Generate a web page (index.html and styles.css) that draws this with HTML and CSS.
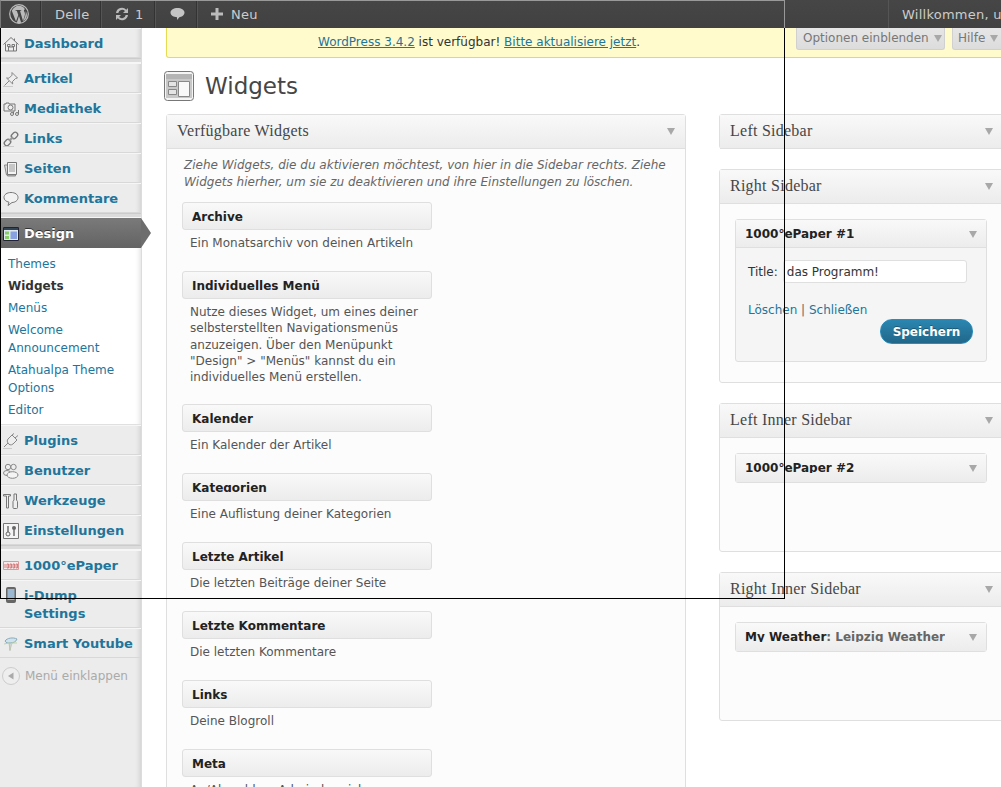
FILE: index.html
```html
<!DOCTYPE html>
<html lang="de">
<head>
<meta charset="utf-8">
<title>Widgets</title>
<link rel="stylesheet" href="styles.css">
</head>
<body>
<svg class="defs" width="0" height="0" aria-hidden="true">
  <defs>
    <symbol id="i-home" viewBox="0 0 16 16"><path d="M.5 8.500 8 1.500l7.500 7M2.500 7.500v7.500h11V7.500M5.500 15v-4h5v4M4.500 8.500h2.500v2h-2.500zM9 8.500h2.500v2H9zM11.500 2.500v2.500" fill="none" stroke="#777" stroke-width="1"/></symbol>
    <symbol id="i-pin" viewBox="0 0 16 16"><path d="M9 1.500 14.500 7l-2 .5-3 3 .2 2.500L3.500 7l2.500.2 3-3zM6 10l-4.500 4.500" fill="#eee" stroke="#888"/><path d="M0 15.500h10" stroke="#ccc"/></symbol>
    <symbol id="i-media" viewBox="0 0 16 16"><path d="M1 3h2V2h3v1h6v7H1z" fill="#eee" stroke="#777"/><circle cx="7.500" cy="6.500" r="2.500" fill="none" stroke="#777"/><circle cx="9" cy="13" r="1.500" fill="none" stroke="#777"/><circle cx="14" cy="13" r="1.500" fill="none" stroke="#777"/><path d="M10.500 13V10.500M15.500 13V9" stroke="#777"/></symbol>
    <symbol id="i-link" viewBox="0 0 16 16"><g fill="none" stroke="#777"><rect x="-3.500" y="-2.500" width="7" height="5" rx="2.500" transform="translate(4.500 11.500) rotate(-45)" stroke-width="1.300"/><rect x="-3.500" y="-2.500" width="7" height="5" rx="2.500" transform="translate(11.500 4.500) rotate(-45)" stroke-width="1.300"/></g><path d="M6 10 10 6" stroke="#999" stroke-width="2"/><path d="M0 15.500h11" stroke="#ccc"/></symbol>
    <symbol id="i-page" viewBox="0 0 16 16"><path d="M1.500 4h3v11h8v-1h-9z" fill="#ddd" stroke="#888"/><path d="M4.500 1.500h9v12h-9z" fill="#f4f4f4" stroke="#777"/><path d="M6 4h6M6 6h6M6 8h6M6 10h6" stroke="#999"/></symbol>
    <symbol id="i-comment" viewBox="0 0 16 16"><path d="M8 1.500c4 0 7 2 7 5s-3 5-6 5l-4 3 1-3.300C3 10.500 1 9 1 6.500c0-3 3-5 7-5z" fill="#f2f2f2" stroke="#777"/></symbol>
    <symbol id="i-plug" viewBox="0 0 16 16"><path d="M5 6 9 2l5 5-4 4c-2 1.500-4 1-5-1-1-1.500-1-2.500 0-4zM9 2l2-1.500M12 5l3-2.500M5 10l-4 4" fill="#eee" stroke="#888"/><path d="M0 15.500h9" stroke="#ccc"/></symbol>
    <symbol id="i-users" viewBox="0 0 16 16"><circle cx="5" cy="4" r="2.700" fill="#eee" stroke="#888"/><circle cx="10.500" cy="4" r="2.700" fill="#eee" stroke="#888"/><ellipse cx="4" cy="10" rx="3.500" ry="2.500" fill="#eee" stroke="#888"/><ellipse cx="9.500" cy="12" rx="5.500" ry="3.300" fill="#f4f4f4" stroke="#888"/></symbol>
    <symbol id="i-tools" viewBox="0 0 16 16"><path d="M.5 1.500h7v1.500h-2v12h-2V3h-3zM11 7V1h2.500v6l1 1.500v6a1 1 0 0 1-1 1h-2.500a1 1 0 0 1-1-1v-6z" fill="#eee" stroke="#777"/></symbol>
    <symbol id="i-set" viewBox="0 0 16 16"><path d="M.5.500h15v15H.5z" fill="#f4f4f4" stroke="#777"/><circle cx="5" cy="11" r="2" fill="none" stroke="#666"/><path d="M5 9V3M11 6.500V13" stroke="#666" stroke-width="1.400"/><circle cx="11" cy="5" r="2" fill="#666"/></symbol>
    <symbol id="i-paper" viewBox="0 0 16 16"><path d="M.5 3.500h15v8H.5z" fill="#f6eaea" stroke="#d99"/><path d="M2 6v4M4 6h1.500v4H4zM7 6h1.500v4H7zM10 6h1.500v4H10zM13 6h1.500v4H13z" fill="none" stroke="#c66" stroke-width=".8"/></symbol>
    <symbol id="i-phone" viewBox="0 0 16 16"><rect x="3" y="0" width="10" height="16" rx="2" fill="#666"/><rect x="4.500" y="2" width="7" height="11" fill="#9bb8d0"/></symbol>
    <symbol id="i-yt" viewBox="0 0 16 16"><path d="M2 5c2-3 8-4 12-2-1 3-4 4-7 4-2 0-4 0-5-2z" fill="#cfe3ef" stroke="#8ab"/><path d="M1 8l5-1 1 7 2-7h5" fill="none" stroke="#bcd5a0"/><path d="M7 7v8" stroke="#bbb"/></symbol>
  </defs>
</svg>

<header class="adminbar">
  <div class="ab-left">
    <div class="ab-item ab-logo">
      <svg width="20" height="20" viewBox="0 0 20 20"><circle cx="10" cy="10" r="9.300" fill="none" stroke="#bbb" stroke-width="1.200"/><path d="M2.800 6.800 7 17.500l2.300-6.500-1.500-4.200h-1.200V6h5.600v.8h-1.200L14 17l1.600-5c.6-1.800.5-3-.4-4.500-.5-1-.2-2 .8-2.300C14.300 2.800 12.300 1.800 10 1.800 6.900 1.800 4.300 3.800 2.800 6.800zM10 12l-2.200 6.800c1.400.4 3 .3 4.400-.1zM16.600 7c.5 2.800-.2 5-2.400 10.300 3.600-2.300 5-6.500 2.400-10.300z" fill="#bbb"/></svg>
    </div>
    <div class="ab-item ab-user">Delle</div>
    <div class="ab-item ab-update">
      <svg width="16" height="16" viewBox="0 0 16 16"><path d="M2 7a6 6 0 0 1 10.300-3.300L14 2v5H9l2-2A4 4 0 0 0 4.300 7zM14 9a6 6 0 0 1-10.300 3.300L2 14V9h5l-2 2a4 4 0 0 0 6.700-2z" fill="#bbb"/></svg>
      <span>1</span>
    </div>
    <div class="ab-item ab-comment">
      <svg width="15" height="14" viewBox="0 0 16 15"><path d="M8 1c4 0 7.500 1.800 7.500 5S12 11 10 11l-2.500 3V11C4 11 .5 9.200.5 6S4 1 8 1z" fill="#c4c4c4"/></svg>
    </div>
    <div class="ab-item ab-new">
      <svg width="12" height="12" viewBox="0 0 12 12"><path d="M4.500 0h3v4.500H12v3H7.500V12h-3V7.500H0v-3h4.500z" fill="#bbb"/></svg>
      <span>Neu</span>
    </div>
  </div>
  <div class="ab-item ab-welcome">Willkommen, user</div>
</header>

<div class="layout">
  <nav class="sidebar">
    <a class="menu-item"><svg class="mi"><use href="#i-home"/></svg>Dashboard</a>
    <div class="menu-sep"></div>
    <a class="menu-item"><svg class="mi"><use href="#i-pin"/></svg>Artikel</a>
    <a class="menu-item"><svg class="mi"><use href="#i-media"/></svg>Mediathek</a>
    <a class="menu-item"><svg class="mi"><use href="#i-link"/></svg>Links</a>
    <a class="menu-item"><svg class="mi"><use href="#i-page"/></svg>Seiten</a>
    <a class="menu-item"><svg class="mi"><use href="#i-comment"/></svg>Kommentare</a>
    <div class="menu-sep"></div>
    <a class="menu-item menu-current">
      <svg class="mi" viewBox="0 0 16 16"><path d="M.5 1.500h15v13H.5z" fill="#dfe8f0" stroke="#223"/><path d="M1 2h14v2H1z" fill="#345"/><path d="M2 5.500h4v3H2zM2 10h4v3H2z" fill="#8c6"/><path d="M7.500 5.500H14V13H7.500z" fill="#88a0e0"/></svg>
      Design
    </a>
    <ul class="submenu">
      <li><a>Themes</a></li>
      <li class="sub-current"><a>Widgets</a></li>
      <li><a>Menüs</a></li>
      <li><a>Welcome Announcement</a></li>
      <li><a>Atahualpa Theme Options</a></li>
      <li><a>Editor</a></li>
    </ul>
    <a class="menu-item"><svg class="mi"><use href="#i-plug"/></svg>Plugins</a>
    <a class="menu-item"><svg class="mi"><use href="#i-users"/></svg>Benutzer</a>
    <a class="menu-item"><svg class="mi"><use href="#i-tools"/></svg>Werkzeuge</a>
    <a class="menu-item"><svg class="mi"><use href="#i-set"/></svg>Einstellungen</a>
    <div class="menu-sep"></div>
    <a class="menu-item"><svg class="mi"><use href="#i-paper"/></svg>1000°ePaper</a>
    <a class="menu-item menu-tall"><svg class="mi"><use href="#i-phone"/></svg><span>i-Dump Settings</span></a>
    <a class="menu-item"><svg class="mi"><use href="#i-yt"/></svg>Smart Youtube</a>
    <div class="collapse">
      <svg width="18" height="18" viewBox="0 0 18 18"><circle cx="9" cy="9" r="8.500" fill="#eee" stroke="#ccc"/><path d="M11.500 5.500v7L6 9z" fill="#aaa"/></svg>
      Menü einklappen
    </div>
  </nav>

  <main class="content">
    <div class="notice">
      <span><a>WordPress 3.4.2</a> ist verfügbar! <a>Bitte aktualisiere jetzt</a>.</span>
      <div class="tabs">
        <div class="tab tab-options">Optionen einblenden<i class="arrow"></i></div>
        <div class="tab tab-help">Hilfe<i class="arrow"></i></div>
      </div>
    </div>

    <div class="page-title">
      <svg class="page-icon" width="30" height="30" viewBox="0 0 30 30"><rect x=".5" y=".5" width="29" height="29" rx="3" fill="#f4f4f4" stroke="#777"/><path d="M2 3h26v24H2z" fill="#c8c8c8"/><path d="M2 3h26v5H2z" fill="#b4b4b4"/><path d="M4.500 10.500h8v5h-8zM4.500 18.500h8v5h-8z" fill="#e4e4e4" stroke="#888"/><path d="M14.500 10.500h11v15h-11z" fill="#f8f8f8" stroke="#888"/></svg>
      <h1>Widgets</h1>
    </div>

    <div class="columns">
      <section class="panel panel-available">
        <div class="panel-head"><h2>Verfügbare Widgets</h2><i class="arrow"></i></div>
        <p class="panel-desc">Ziehe Widgets, die du aktivieren möchtest, von hier in die Sidebar rechts. Ziehe Widgets hierher, um sie zu deaktivieren und ihre Einstellungen zu löschen.</p>
        <div class="widget-list">
          <article class="avail"><div class="w-title"><span>Archive</span></div><p>Ein Monatsarchiv von deinen Artikeln</p></article>
          <article class="avail"><div class="w-title"><span>Individuelles Menü</span></div><p>Nutze dieses Widget, um eines deiner selbsterstellten Navigationsmenüs anzuzeigen. Über den Menüpunkt "Design" &gt; "Menüs" kannst du ein individuelles Menü erstellen.</p></article>
          <article class="avail"><div class="w-title"><span>Kalender</span></div><p>Ein Kalender der Artikel</p></article>
          <article class="avail"><div class="w-title"><span>Kategorien</span></div><p>Eine Auflistung deiner Kategorien</p></article>
          <article class="avail"><div class="w-title"><span>Letzte Artikel</span></div><p>Die letzten Beiträge deiner Seite</p></article>
          <article class="avail"><div class="w-title"><span>Letzte Kommentare</span></div><p>Die letzten Kommentare</p></article>
          <article class="avail"><div class="w-title"><span>Links</span></div><p>Deine Blogroll</p></article>
          <article class="avail"><div class="w-title"><span>Meta</span></div><p>An/Abmelden, Admin-bereich</p></article>
        </div>
      </section>

      <div class="side-col">
        <section class="panel panel-closed">
          <div class="panel-head"><h2>Left Sidebar</h2><i class="arrow"></i></div>
        </section>
        <section class="panel panel-right">
          <div class="panel-head"><h2>Right Sidebar</h2><i class="arrow"></i></div>
          <div class="panel-body">
            <div class="placed open">
              <div class="placed-head"><span>1000°ePaper #1</span><i class="arrow"></i></div>
              <div class="placed-form">
                <div class="field"><label>Title:</label><input class="title-input" type="text" value="das Programm!"></div>
                <div class="form-links"><a>Löschen</a> | <a>Schließen</a></div>
                <div class="form-actions"><button class="save" type="button">Speichern</button></div>
              </div>
            </div>
          </div>
        </section>
        <section class="panel">
          <div class="panel-head"><h2>Left Inner Sidebar</h2><i class="arrow"></i></div>
          <div class="panel-body body-fixed">
            <div class="placed"><div class="placed-head"><span>1000°ePaper #2</span><i class="arrow"></i></div></div>
          </div>
        </section>
        <section class="panel">
          <div class="panel-head"><h2>Right Inner Sidebar</h2><i class="arrow"></i></div>
          <div class="panel-body body-fixed">
            <div class="placed"><div class="placed-head"><span>My Weather<em>: Leipzig Weather</em></span><i class="arrow"></i></div></div>
          </div>
        </section>
      </div>
    </div>
  </main>
</div>

<div class="frame"></div>
<div class="frame-bar"></div>
</body>
</html>
```
FILE: styles.css
```css
* { box-sizing: border-box; }
html, body { margin: 0; height: 787px; overflow: hidden; background: #fff; }
body { width: 1001px; position: relative; font-family: "DejaVu Sans", sans-serif; font-size: 12px; color: #333; }
a { color: #21759b; text-decoration: none; }
p { margin: 0; }
.defs { position: absolute; }

.adminbar { height: 28px; display: flex; justify-content: space-between; background: linear-gradient(#464646, #414141); color: #ccc; font-size: 13px; overflow: hidden; position: relative; z-index: 2; }
.ab-left { display: flex; }
.ab-item { display: flex; align-items: center; gap: 5px; height: 28px; border-right: 1px solid #555; box-shadow: inset -1px 0 0 #333; white-space: nowrap; letter-spacing: .25px; }
.ab-logo { width: 42px; justify-content: center; padding-right: 4px; }
.ab-user { width: 60px; padding-left: 13px; }
.ab-update { width: 54px; padding-left: 12px; }
.ab-comment { width: 42px; padding-left: 14px; }
.ab-new { padding-left: 13px; gap: 8px; border: 0; box-shadow: none; }
.ab-welcome { width: 113px; flex: none; padding-left: 13px; border-right: 0; box-shadow: none; border-left: 1px solid #555; overflow: hidden; }

.layout { display: flex; height: 759px; }
.sidebar { width: 142px; flex: none; background: #ececec; border-right: 1px solid #dcdcdc; box-shadow: inset -6px 0 6px -6px rgba(0,0,0,.18); position: relative; }
.menu-item { display: flex; align-items: center; height: 30px; padding: 1px 0 0 3px; gap: 5px; font-size: 13px; font-weight: bold; color: #21759b; border-bottom: 1px solid #d8d8d8; border-top: 1px solid #f6f6f6; line-height: 18px; }
.mi { width: 16px; height: 16px; flex: none; }
.menu-sep { height: 5px; background: #dcdcdc; border-top: 1px solid #ccc; border-bottom: 1px solid #f6f6f6; }
.menu-tall { height: 48px; align-items: flex-start; padding-top: 6px; }
.menu-tall span { width: 100px; }
.menu-current { background: linear-gradient(#7a7a7a, #636363); color: #fff; border: 0; position: relative; text-shadow: 0 -1px 0 #333; }
.menu-current::after { content: ""; position: absolute; left: 141px; top: 0; border-left: 10px solid #6d6d6d; border-top: 15px solid transparent; border-bottom: 15px solid transparent; }
.submenu { list-style: none; margin: 0; padding: 5px 0 6px 8px; height: 177px; background: #fff; border-bottom: 1px solid #e0e0e0; line-height: 18px; box-shadow: inset -6px 0 6px -6px rgba(0,0,0,.18); }
.submenu li { padding: 2px 0; width: 122px; }
.sub-current a { color: #333; font-weight: bold; }
.collapse { display: flex; align-items: center; gap: 5px; height: 36px; padding-left: 2px; color: #aaa; }

.content { flex: none; width: 859px; padding: 0 0 0 24px; }
.notice { height: 30px; width: 880px; background: #fffbcc; border: 1px solid #e6db55; border-top: 0; border-radius: 0 0 3px 3px; display: flex; padding-left: 151px; padding-top: 7px; position: relative; line-height: 15px; }
.notice a { text-decoration: underline; }
.tabs { position: absolute; left: 629px; top: 0; display: flex; gap: 7px; }
.tab { height: 22px; background: linear-gradient(#e6e6e6, #dcdcdc); border: 1px solid #d0d0d0; border-top: 0; border-radius: 0 0 3px 3px; color: #777; display: flex; align-items: center; padding: 0 5px; gap: 5px; white-space: nowrap; flex: none; }
.tab-options { width: 149px; padding-left: 6px; }
.tab-help { width: 60px; }
.arrow { display: inline-block; width: 0; height: 0; border-left: 4px solid transparent; border-right: 4px solid transparent; border-top: 7px solid #a8a8a8; flex: none; }

.page-title { display: flex; align-items: center; height: 30px; margin: 13px 0 13px -2px; gap: 11px; }
.page-title h1 { margin: 0; font-size: 23px; font-weight: normal; color: #464646; line-height: 30px; }
.page-icon { flex: none; }

.columns { display: flex; align-items: flex-start; gap: 33px; width: 860px; }
.panel { background: #fcfcfc; border: 1px solid #dfdfdf; border-radius: 3px; }
.panel-available { width: 520px; height: 800px; flex: none; }
.panel-head { height: 34px; display: flex; justify-content: space-between; align-items: center; padding: 0 10px; background: linear-gradient(#f9f9f9, #ececec); border-bottom: 1px solid #dfdfdf; }
.panel-head h2 { margin: 0 0 2px; font-family: "Liberation Serif", serif; font-size: 16px; letter-spacing: .25px; font-weight: normal; color: #464646; }
.panel-desc { margin: 8px 0 0; padding: 0 10px 0 17px; font-style: italic; color: #666; line-height: 17px; }
.widget-list { padding: 11px 0 0 15px; }
.avail { width: 250px; height: 69px; }
.avail:nth-child(2) { height: 133px; }
.avail p { padding: 5px 8px 0; line-height: 16.250px; color: #555; }
.w-title { height: 28px; padding: 6px 9px 0; background: linear-gradient(#f9f9f9, #ececec); border: 1px solid #dfdfdf; border-radius: 3px; font-size: 12px; font-weight: bold; color: #222; line-height: 16px; }
.w-title span { display: block; height: 12px; padding-top: 4px; line-height: 8px; overflow: hidden; }

.side-col { width: 290px; flex: none; display: flex; flex-direction: column; gap: 20px; }
.side-col .panel-head { padding-right: 15px; }
.panel-closed { height: 35px; }
.panel-right { height: 214px; }
.panel-body { padding: 15px 14px 0 15px; }
.body-fixed { height: 113px; }
.placed { width: 252px; background: #f5f5f5; border: 1px solid #dfdfdf; border-radius: 3px; }
.placed.open { height: 143px; }
.placed-head { height: 28px; display: flex; justify-content: space-between; align-items: flex-start; padding: 0 9px; background: linear-gradient(#f9f9f9, #ececec); font-size: 12px; font-weight: bold; color: #222; }
.placed-head .arrow { margin-top: 11px; }
.placed-head span { height: 19px; padding-top: 10px; line-height: 8px; overflow: hidden; }
.placed-head em { font-style: normal; color: #666; }
.open .placed-head { border-bottom: 1px solid #dfdfdf; }
.placed-form { padding: 12px 13px 0 12px; }
.field { display: flex; align-items: center; gap: 5px; }
.title-input { width: 184px; height: 23px; padding: 0 3px; border: 1px solid #dfdfdf; border-radius: 3px; background: #fff; font: 12px "DejaVu Sans", sans-serif; color: #333; }
.form-links { margin-top: 19px; line-height: 16px; color: #666; }
.form-links a { color: #21759b; }
.form-actions { display: flex; justify-content: flex-end; margin-top: 1px; }
.save { width: 93px; height: 25px; border: 1px solid #298cba; border-radius: 12px; background: linear-gradient(#2a86b0, #21678a); color: #fff; font: bold 12px "DejaVu Sans", sans-serif; text-shadow: 0 -1px 0 rgba(0,0,0,.3); padding: 0; }

.frame { position: absolute; left: 0; top: 0; width: 785px; height: 599px; border: 1px solid #000; z-index: 1; pointer-events: none; }
.frame-bar { position: absolute; left: 0; top: 0; width: 785px; height: 28px; border: 1px solid #999; border-bottom: 0; border-left-color: #777; z-index: 3; pointer-events: none; }
```
